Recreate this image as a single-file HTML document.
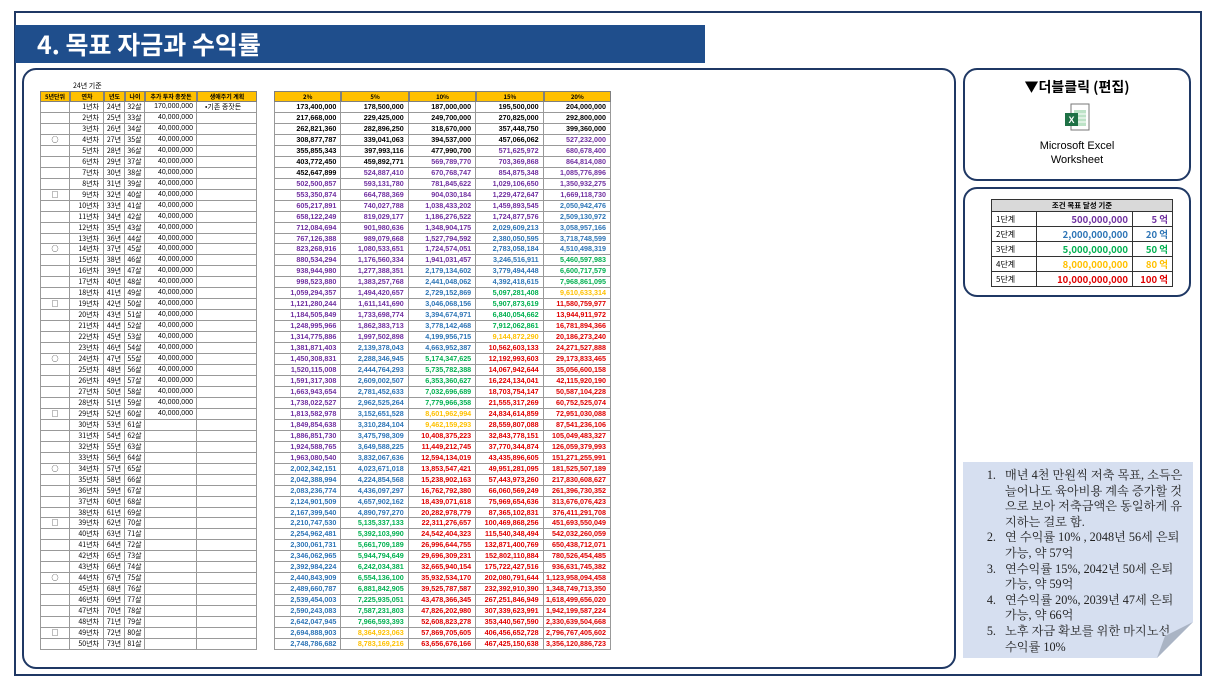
<!DOCTYPE html>
<html><head><meta charset="utf-8"><style>
*{margin:0;padding:0;box-sizing:border-box}
body{width:1216px;height:684px;background:#fff;position:relative;overflow:hidden;font-family:"Liberation Sans","Noto Sans CJK KR",sans-serif}
.frame{position:absolute;left:14px;top:11px;width:1188px;height:665px;border:2px solid #1f3864}
.title{position:absolute;left:15px;top:25px;width:690px;height:38px;background:#1f4e8c;color:#fff;font-size:25px;font-weight:bold;line-height:38px;padding-left:22px;font-family:"Noto Sans CJK KR",sans-serif}
.panel{position:absolute;border:2px solid #1f3864;border-radius:14px;background:#fff}
.c{position:absolute;font-size:7px;line-height:10.96px;height:10.96px;border-right:1px solid #999;border-bottom:1px solid #999;overflow:hidden;white-space:nowrap;font-family:"Noto Sans CJK KR","Liberation Sans",sans-serif}
.h{background:#ffc000;font-weight:bold;text-align:center;border:1px solid #7f7f7f}
.n{font-family:"Liberation Sans",sans-serif;font-weight:bold;text-align:right;padding-right:4px;font-size:7.2px}
.note{position:absolute;left:963px;top:462px;width:230px;height:196px;background:#d6dff0;font-family:"Liberation Serif","Noto Serif CJK KR","Noto Serif CJK SC",serif;font-size:12.2px;line-height:15.6px;color:#222;padding:6px 10px 0 10px}
.note ol{padding-left:26px}
.note li{padding-left:6px}
.goal td{border:1px solid #333;font-size:9.5px;height:14.5px;padding:0 4px}
</style></head><body>
<div class="frame"></div>
<div class="title">4. 목표 자금과 수익률</div>
<div class="panel" style="left:22px;top:68px;width:934px;height:601px"></div>
<div style="position:absolute;left:73px;top:81px;font-size:7px;font-family:'Noto Sans CJK KR',sans-serif">24년 기준</div>
<div id="t"></div>
<div class="panel" style="left:963px;top:68px;width:228px;height:113px;text-align:center">
<div style="font-size:14px;font-weight:bold;margin-top:7px;font-family:'Noto Sans CJK KR',sans-serif">▼더블클릭 (편집)</div>
<svg width="30" height="32" viewBox="0 0 30 32" style="margin-top:5px"><rect x="9" y="2" width="18" height="26" fill="#fff" stroke="#777"/><rect x="12" y="8" width="12" height="16" fill="#bde3c7"/><line x1="12" y1="12" x2="24" y2="12" stroke="#fff"/><line x1="12" y1="16" x2="24" y2="16" stroke="#fff"/><line x1="12" y1="20" x2="24" y2="20" stroke="#fff"/><rect x="3" y="11" width="13" height="13" fill="#1e7145"/><text x="9.5" y="21" font-size="9" fill="#fff" text-anchor="middle" font-weight="bold" font-family="Liberation Sans">X</text></svg>
<div style="font-size:11px;line-height:14px;font-family:'Liberation Sans',sans-serif">Microsoft Excel<br>Worksheet</div>
</div>
<div class="panel" style="left:963px;top:187px;width:228px;height:110px">
<table class="goal" style="position:absolute;left:26px;top:10px;border-collapse:collapse;width:182px;font-family:'Noto Sans CJK KR',sans-serif">
<tr><td colspan="3" style="background:#d9d9d9;text-align:center;font-weight:bold;font-size:7.5px;height:12px">조건 목표 달성 기준</td></tr>
<tr><td style="font-size:8px;width:45px">1단계</td><td style="text-align:right;color:#7030a0;font-weight:bold">500,000,000</td><td style="text-align:right;color:#7030a0;font-weight:bold">5 억</td></tr>
<tr><td style="font-size:8px">2단계</td><td style="text-align:right;color:#2e75b6;font-weight:bold">2,000,000,000</td><td style="text-align:right;color:#2e75b6;font-weight:bold">20 억</td></tr>
<tr><td style="font-size:8px">3단계</td><td style="text-align:right;color:#00b050;font-weight:bold">5,000,000,000</td><td style="text-align:right;color:#00b050;font-weight:bold">50 억</td></tr>
<tr><td style="font-size:8px">4단계</td><td style="text-align:right;color:#ffc000;font-weight:bold">8,000,000,000</td><td style="text-align:right;color:#ffc000;font-weight:bold">80 억</td></tr>
<tr><td style="font-size:8px">5단계</td><td style="text-align:right;color:#e00000;font-weight:bold">10,000,000,000</td><td style="text-align:right;color:#e00000;font-weight:bold;width:40px">100 억</td></tr>
</table></div>
<div class="note"><ol>
<li>매년 4천 만원씩 저축 목표, 소득은 늘어나도 육아비용 계속 증가할 것으로 보아 저축금액은 동일하게 유지하는 걸로 함.</li>
<li>연 수익률 10% , 2048년 56세 은퇴가능, 약 57억</li>
<li>연수익률 15%, 2042년 50세 은퇴가능, 약 59억</li>
<li>연수익률 20%, 2039년 47세 은퇴가능, 약 66억</li>
<li>노후 자금 확보를 위한 마지노선 수익률 10%</li></ol>
<svg style="position:absolute;right:0;bottom:0" width="36" height="36"><polygon points="36,0 36,36 0,36" fill="#fff"/><polygon points="36,0 0,36 8,14" fill="#aab4c4"/></svg>
</div>
<script>
var t=document.getElementById('t'),h='';
function cell(x,y,w,txt,cls,st){h+='<div class="c '+cls+'" style="left:'+x+'px;top:'+y+'px;width:'+w+'px;'+(st||'')+'">'+txt+'</div>';}
var L=[[40,30,'5년단위'],[70,34,'연차'],[104,21,'년도'],[125,20,'나이'],[145,52,'추가 투자 총잣돈'],[197,60,'생애주기 계획']];
L.forEach(function(c){cell(c[0],91,c[1],c[2],'h','font-size:6px')});
var R=['2%','5%','10%','15%','20%'],rt=[.02,.05,.1,.15,.2],cw=67.4;
R.forEach(function(r,i){cell(274+i*cw,91,cw,r,'h','font-size:6px')});
function fmt(v){return Math.round(v).toString().replace(/\B(?=(\d{3})+(?!\d))/g,',');}
function col(v){if(v>=1e10)return'#e00000';if(v>=8e9)return'#ffc000';if(v>=5e9)return'#00b050';if(v>=2e9)return'#2e75b6';if(v>=5e8)return'#7030a0';return'#000';}
var val=[0,0,0,0,0];
for(var n=1;n<=50;n++){var y=102+(n-1)*10.96;
var mk=(n%10==4)?'○':(n%10==9?'□':'');
var add=n==1?170000000:(n<=29?40000000:0);
var bl='border-left:1px solid #999;';
cell(40,y,30,mk,'','text-align:center;'+bl);
cell(70,y,34,n+'년차','','text-align:right;padding-right:4px');
cell(104,y,21,(23+n)+'년','','text-align:center');
cell(125,y,20,(31+n)+'살','','text-align:center');
cell(145,y,52,add?fmt(add):'','','text-align:right;padding-right:3px;font-family:Liberation Sans');
cell(197,y,60,n==1?'•기존 종잣돈':'','','padding-left:8px');
for(var i=0;i<5;i++){val[i]=(val[i]+add)*(1+rt[i]);
cell(274+i*cw,y,cw,fmt(val[i]),'n','color:'+col(val[i])+';'+(i==0?bl:''));}
}
t.innerHTML=h;
</script>
</body></html>
